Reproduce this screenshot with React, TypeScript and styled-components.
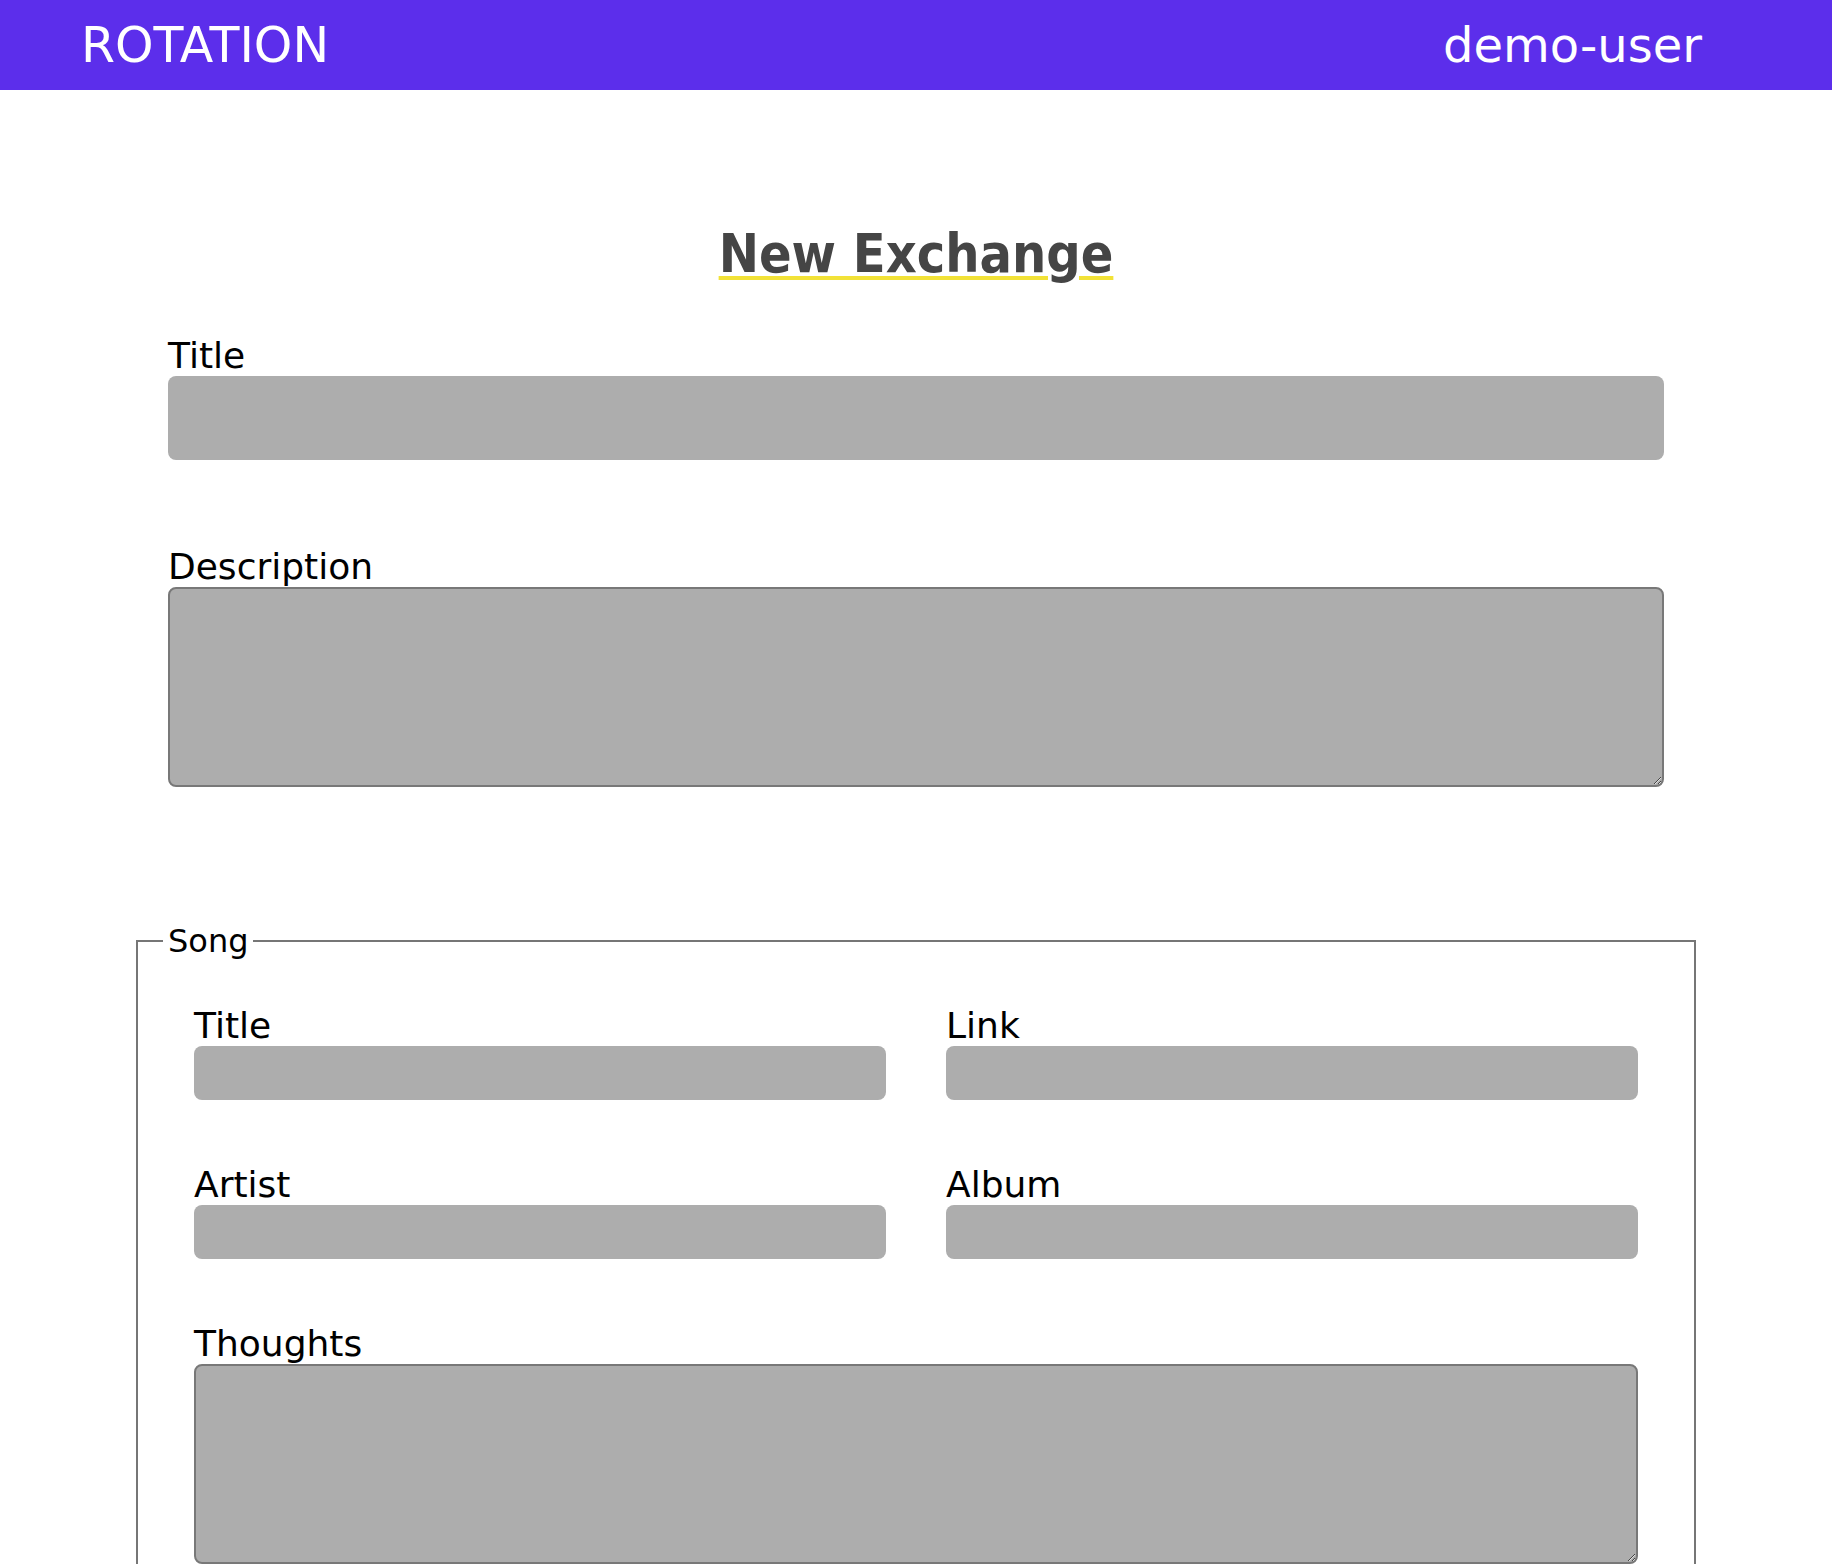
import React from "react";
import styled, { createGlobalStyle } from "styled-components";

const GlobalStyle = createGlobalStyle`
  html, body {
    margin: 0;
    padding: 0;
    background: #ffffff;
    font-family: "DejaVu Sans", "Liberation Sans", sans-serif;
    color: #000;
  }
  * { box-sizing: border-box; }
`;

const Header = styled.header`
  height: 90px;
  background: #5c2eeb;
  display: flex;
  align-items: center;
  justify-content: space-between;
  padding: 0 130px 0 81px;
  color: #ffffff;
`;

const Logo = styled.div`
  font-family: "DejaVu Sans", sans-serif;
  font-size: 49px;
  line-height: normal;
`;

const UserName = styled.div`
  font-family: "DejaVu Sans", sans-serif;
  font-size: 48px;
  line-height: normal;
`;

const Main = styled.main`
  width: 1560px;
  margin: 0 auto;
  display: flex;
  flex-direction: column;
`;

const Heading = styled.h1`
  margin: 132px 0 49.5px;
  text-align: center;
  font-family: "DejaVu Sans Condensed", "DejaVu Sans", sans-serif;
  font-weight: bold;
  font-size: 53.5px;
  line-height: normal;
  color: #454545;
  span {
    text-decoration: underline;
    text-decoration-color: #f2e237;
    text-decoration-thickness: 4px;
    text-underline-offset: 4px;
  }
`;

const TopFields = styled.div`
  padding: 0 32px;
  display: flex;
  flex-direction: column;
  gap: 86.5px;
`;

const Field = styled.div<{ $span?: boolean }>`
  display: flex;
  flex-direction: column;
  grid-column: ${(p) => (p.$span ? "1 / -1" : "auto")};
`;

const Label = styled.label`
  display: block;
  font-size: 36px;
  line-height: 41px;
  color: #000;
`;

const TextInput = styled.input<{ $tall?: boolean }>`
  display: block;
  width: 100%;
  height: ${(p) => (p.$tall ? "84px" : "54px")};
  border: none;
  border-radius: 8px;
  background: #adadad;
  font-family: inherit;
  font-size: 24px;
  padding: 0 12px;
  outline: none;
`;

const TextArea = styled.textarea`
  display: block;
  width: 100%;
  height: 200px;
  border: 2px solid #787878;
  border-radius: 8px;
  background: #adadad;
  font-family: inherit;
  font-size: 24px;
  padding: 8px 12px;
  outline: none;
`;

const SongSet = styled.fieldset`
  margin: 135px 0 0;
  padding: 0 25px 60px;
  border: 2px solid #767676;
  min-width: 0;
`;

const Legend = styled.legend`
  font-size: 32px;
  line-height: normal;
  padding: 0 5px;
  margin-left: 0;
`;

const SongGrid = styled.div`
  padding: 45px 31px 0;
  display: grid;
  grid-template-columns: 1fr 1fr;
  column-gap: 60px;
  row-gap: 64px;
`;

export default function App() {
  return (
    <>
      <GlobalStyle />
      <Header>
        <Logo>ROTATION</Logo>
        <UserName>demo-user</UserName>
      </Header>
      <Main>
        <Heading>
          <span>New Exchange</span>
        </Heading>
        <TopFields>
          <Field>
            <Label htmlFor="ex-title">Title</Label>
            <TextInput id="ex-title" $tall />
          </Field>
          <Field>
            <Label htmlFor="ex-desc">Description</Label>
            <TextArea id="ex-desc" />
          </Field>
        </TopFields>
        <SongSet>
          <Legend>Song</Legend>
          <SongGrid>
            <Field>
              <Label htmlFor="song-title">Title</Label>
              <TextInput id="song-title" />
            </Field>
            <Field>
              <Label htmlFor="song-link">Link</Label>
              <TextInput id="song-link" />
            </Field>
            <Field>
              <Label htmlFor="song-artist">Artist</Label>
              <TextInput id="song-artist" />
            </Field>
            <Field>
              <Label htmlFor="song-album">Album</Label>
              <TextInput id="song-album" />
            </Field>
            <Field $span>
              <Label htmlFor="song-thoughts">Thoughts</Label>
              <TextArea id="song-thoughts" />
            </Field>
          </SongGrid>
        </SongSet>
      </Main>
    </>
  );
}
